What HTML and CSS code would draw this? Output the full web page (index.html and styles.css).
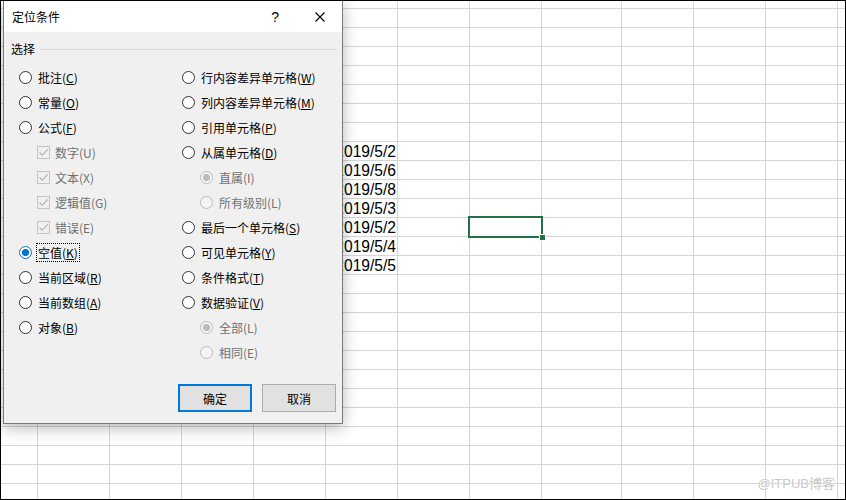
FILE: index.html
```html
<!DOCTYPE html>
<html lang="zh-CN">
<head>
<meta charset="utf-8">
<title>定位条件</title>
<link rel="stylesheet" href="styles.css">
</head>
<body>
<div class="page">
  <div class="sheet">
    <div class="col col-a"></div>
    <div class="col"></div>
    <div class="col"></div>
    <div class="col"></div>
    <div class="col"></div>
    <div class="col col-dates">
      <div class="cell">2019/5/2</div>
      <div class="cell">2019/5/6</div>
      <div class="cell">2019/5/8</div>
      <div class="cell">2019/5/3</div>
      <div class="cell">2019/5/2</div>
      <div class="cell">2019/5/4</div>
      <div class="cell">2019/5/5</div>
    </div>
    <div class="col"></div>
    <div class="col col-sel"><div class="selection"><span class="handle"></span></div></div>
    <div class="col col-wide"></div>
    <div class="col"></div>
    <div class="col"></div>
    <div class="col"></div>
    <div class="col col-rest"></div>
  </div>

  <div class="watermark">@ITPUB博客</div>

  <div class="dialog">
    <div class="titlebar">
      <span class="title">定位条件</span>
      <span class="help">?</span>
      <span class="close"><svg width="10" height="10" viewBox="0 0 10 10"><path d="M0.5 0.5 L9.5 9.5 M9.5 0.5 L0.5 9.5" stroke="#000" stroke-width="1.1" fill="none"/></svg></span>
    </div>
    <div class="body">
      <div class="group-head"><span class="group-label">选择</span><span class="rule"></span></div>
      <div class="options">
        <div class="column col-left">
          <div class="opt"><span class="radio"></span><span class="lbl">批注(<u>C</u>)</span></div>
          <div class="opt"><span class="radio"></span><span class="lbl">常量(<u>O</u>)</span></div>
          <div class="opt"><span class="radio"></span><span class="lbl">公式(<u>F</u>)</span></div>
          <div class="opt sub disabled"><span class="check"><svg width="11" height="11" viewBox="0 0 11 11"><path d="M1.5 5.5 L4.2 8.2 L9.8 2.4" stroke="#b4b4b4" stroke-width="1.2" fill="none"/></svg></span><span class="lbl">数字(U)</span></div>
          <div class="opt sub disabled"><span class="check"><svg width="11" height="11" viewBox="0 0 11 11"><path d="M1.5 5.5 L4.2 8.2 L9.8 2.4" stroke="#b4b4b4" stroke-width="1.2" fill="none"/></svg></span><span class="lbl">文本(X)</span></div>
          <div class="opt sub disabled"><span class="check"><svg width="11" height="11" viewBox="0 0 11 11"><path d="M1.5 5.5 L4.2 8.2 L9.8 2.4" stroke="#b4b4b4" stroke-width="1.2" fill="none"/></svg></span><span class="lbl">逻辑值(G)</span></div>
          <div class="opt sub disabled"><span class="check"><svg width="11" height="11" viewBox="0 0 11 11"><path d="M1.5 5.5 L4.2 8.2 L9.8 2.4" stroke="#b4b4b4" stroke-width="1.2" fill="none"/></svg></span><span class="lbl">错误(E)</span></div>
          <div class="opt"><span class="radio checked"></span><span class="lbl focus">空值(<u>K</u>)</span></div>
          <div class="opt"><span class="radio"></span><span class="lbl">当前区域(<u>R</u>)</span></div>
          <div class="opt"><span class="radio"></span><span class="lbl">当前数组(<u>A</u>)</span></div>
          <div class="opt"><span class="radio"></span><span class="lbl">对象(<u>B</u>)</span></div>
        </div>
        <div class="column col-right">
          <div class="opt"><span class="radio"></span><span class="lbl">行内容差异单元格(<u>W</u>)</span></div>
          <div class="opt"><span class="radio"></span><span class="lbl">列内容差异单元格(<u>M</u>)</span></div>
          <div class="opt"><span class="radio"></span><span class="lbl">引用单元格(<u>P</u>)</span></div>
          <div class="opt"><span class="radio"></span><span class="lbl">从属单元格(<u>D</u>)</span></div>
          <div class="opt sub disabled"><span class="radio checked"></span><span class="lbl">直属(I)</span></div>
          <div class="opt sub disabled"><span class="radio"></span><span class="lbl">所有级别(L)</span></div>
          <div class="opt"><span class="radio"></span><span class="lbl">最后一个单元格(<u>S</u>)</span></div>
          <div class="opt"><span class="radio"></span><span class="lbl">可见单元格(<u>Y</u>)</span></div>
          <div class="opt"><span class="radio"></span><span class="lbl">条件格式(<u>T</u>)</span></div>
          <div class="opt"><span class="radio"></span><span class="lbl">数据验证(<u>V</u>)</span></div>
          <div class="opt sub disabled"><span class="radio checked"></span><span class="lbl">全部(L)</span></div>
          <div class="opt sub disabled"><span class="radio"></span><span class="lbl">相同(E)</span></div>
        </div>
      </div>
      <div class="buttons">
        <button class="btn btn-default">确定</button>
        <button class="btn">取消</button>
      </div>
    </div>
  </div>
</div>
</body>
</html>
```

FILE: styles.css
```css
html, body {
  margin: 0;
  padding: 0;
  background: #fff;
}

.page {
  position: relative;
  width: 846px;
  height: 500px;
  box-sizing: border-box;
  border: 1px solid #000;
  overflow: hidden;
  font-family: "Noto Sans CJK SC", "Noto Sans", sans-serif;
  font-size: 12px;
  color: #000;
}

/* spreadsheet */
.sheet {
  display: flex;
  height: 100%;
  background-image: linear-gradient(to bottom, #d4d4d4 1px, transparent 1px);
  background-size: 100% 19px;
  background-position: 0 7px;
  background-repeat: repeat-y;
}

.col {
  flex: none;
  width: 72px;
  box-sizing: border-box;
  border-right: 1px solid #d4d4d4;
  height: 100%;
}

.col-a { width: 37px; }
.col-wide { width: 80px; }
.col-rest { flex: 1; border-right: none; }

.col-dates {
  padding-top: 141px;
}

.cell {
  height: 19px;
  line-height: 19px;
  text-align: right;
  padding-right: 1px;
  font-family: "Liberation Sans", Arial, sans-serif;
  font-size: 15.6px;
  color: #000;
  white-space: nowrap;
}

.col-sel { position: relative; }

.selection {
  position: absolute;
  left: -2px;
  top: 215px;
  width: 75px;
  height: 22px;
  box-sizing: border-box;
  border: 2px solid #217346;
}

.handle {
  position: absolute;
  right: -5px;
  bottom: -5px;
  width: 7px;
  height: 7px;
  box-sizing: border-box;
  background: #217346;
  border: 1px solid #fff;
}

.watermark {
  position: absolute;
  right: 10px;
  bottom: 7px;
  font-family: "Liberation Sans", "Noto Sans CJK SC", sans-serif;
  font-size: 13px;
  line-height: 16px;
  color: #c8c8c8;
  text-shadow: 0 0 1px #fff, 0 0 2px #fff;
}

/* dialog */
.dialog {
  position: absolute;
  left: 2px;
  top: -1px;
  width: 340px;
  height: 424px;
  box-sizing: border-box;
  border: 1px solid #7a7a7a;
  background: #f0f0f0;
  display: flex;
  flex-direction: column;
  box-shadow: 0 4px 14px rgba(0, 0, 0, 0.28);
  z-index: 2;
}

.titlebar {
  height: 31px;
  flex: none;
  background: #fff;
  display: flex;
  align-items: center;
}

.title {
  padding-left: 8px;
  font-size: 12px;
  line-height: 16px;
}

.help {
  margin-left: auto;
  margin-right: 36px;
  font-family: "Liberation Sans", sans-serif;
  font-size: 14px;
  line-height: 16px;
}

.close {
  display: flex;
  width: 10px;
  height: 10px;
  margin-right: 17px;
}

.body {
  flex: 1;
  padding: 9px 5px 0 7px;
  display: flex;
  flex-direction: column;
}

.group-head {
  display: flex;
  align-items: center;
  height: 16px;
  line-height: 16px;
}

.group-label {
  margin-right: 5px;
}

.rule {
  flex: 1;
  height: 1px;
  background: #d7d7d7;
  margin-top: 1px;
}

.options {
  display: flex;
  margin-top: 8px;
  padding-left: 8px;
}

.column {
  display: flex;
  flex-direction: column;
}

.col-left { width: 163px; }

.opt {
  display: flex;
  align-items: center;
  height: 25px;
  gap: 2px;
}

.opt.sub {
  padding-left: 18px;
}

.opt.disabled .lbl {
  color: #707070;
}

.lbl {
  line-height: 15px;
  padding: 1px 1px;
  border: 1px dotted transparent;
  white-space: nowrap;
}

.lbl u {
  text-decoration: underline;
  text-underline-offset: 1px;
}

.lbl.focus {
  border-color: #000;
}

.radio {
  flex: none;
  width: 13px;
  height: 13px;
  box-sizing: border-box;
  border: 1px solid #333;
  border-radius: 50%;
  background: #fff;
  margin-right: 2px;
}

.radio.checked {
  border-color: #0078d7;
  background: radial-gradient(circle, #0078d7 0 3.3px, #fff 3.9px);
}

.disabled .radio {
  border-color: #bcbcbc;
  background: #f4f4f4;
}

.disabled .radio.checked {
  background: radial-gradient(circle, #bcbcbc 0 3.3px, #f4f4f4 3.9px);
}

.check {
  flex: none;
  width: 13px;
  height: 13px;
  box-sizing: border-box;
  border: 1px solid #c4c4c4;
  background: #f0f0f0;
  display: flex;
  align-items: center;
  justify-content: center;
  margin-right: 1px;
}

.buttons {
  display: flex;
  justify-content: flex-end;
  gap: 10px;
  margin-top: 19px;
  padding-right: 1px;
}

.btn {
  width: 74px;
  height: 28px;
  box-sizing: border-box;
  margin: 0;
  padding: 0;
  border: 1px solid #adadad;
  background: #e1e1e1;
  font-family: "Noto Sans CJK SC", sans-serif;
  font-size: 12px;
  color: #000;
}

.btn-default {
  border: 2px solid #0078d7;
}
```
